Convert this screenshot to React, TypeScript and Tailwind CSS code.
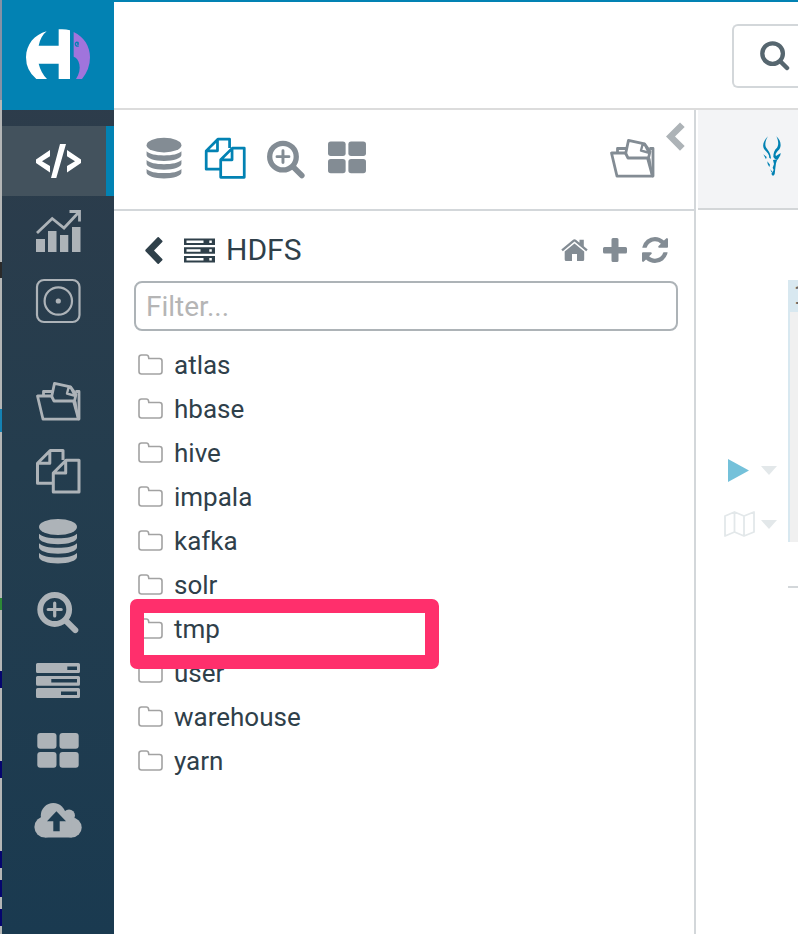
import React from "react";

type IconProps = { className?: string };

const box = "0 0 48 48";

function CodeIcon({ className }: IconProps) {
  return (
    <svg viewBox={box} className={className} fill="currentColor" aria-hidden="true">
      <path d="M2 22.500v3.500l14 9.500v-6.500L8 24.200l8-5V13zM26 7h6L22.300 41H17zM47 22.500v3.500l-14 9.500v-6.500l8-4.800-8-5V13z" />
    </svg>
  );
}

function ChartIcon({ className }: IconProps) {
  return (
    <svg viewBox={box} className={className} fill="currentColor" aria-hidden="true">
      <path d="M2 32h9v13H2zM14 24h8.500v21H14zM26 28h8.300v17H26zM38 20h8.500v25H38z" />
      <path d="M3 26 18.200 11.500 30 21 45 5M35.500 4.500H45.500v10" fill="none" stroke="currentColor" strokeWidth="2.800" />
    </svg>
  );
}

function DialIcon({ className }: IconProps) {
  return (
    <svg viewBox={box} className={className} fill="none" stroke="currentColor" strokeWidth="2.200" aria-hidden="true">
      <rect x="3" y="3" width="42.500" height="42" rx="7" />
      <circle cx="24.300" cy="24" r="13.700" />
      <circle cx="24.300" cy="24" r="2.600" fill="currentColor" stroke="none" />
    </svg>
  );
}

function FolderFilesIcon({ className }: IconProps) {
  return (
    <svg viewBox={box} className={className} fill="none" stroke="currentColor" strokeWidth="2.800" strokeLinejoin="round" strokeLinecap="round" aria-hidden="true">
      <path d="M3.500 19H17.500L20 24H39.500L44.500 42.200H9z" />
      <path d="M9.500 18.500V14.500H17.500M42.500 14.500H45V42" />
      <path d="M17.700 19.500 20.500 6.300 36.500 9.800 42 17.500 40.500 24" />
      <path d="M34.800 9.800 33 16.500 41 18.800M36.500 10 40.500 18" strokeWidth="2.400" />
      <path d="M41.500 25 43.800 40" strokeWidth="2" />
    </svg>
  );
}

function CopyIcon({ className }: IconProps) {
  return (
    <svg viewBox={box} className={className} fill="none" stroke="currentColor" strokeWidth="3" strokeLinejoin="round" aria-hidden="true">
      <path d="M19 36.200H3.500V16.200L16.200 3.500H29V13M15.800 3.500V16.200H3.500" />
      <path d="M32 13.200H45V45H19.300V26zM31.700 13.200V26H19.300" />
    </svg>
  );
}

function DatabaseIcon({ className }: IconProps) {
  return (
    <svg viewBox={box} className={className} fill="currentColor" aria-hidden="true">
      <ellipse cx="24" cy="10" rx="19" ry="8" />
      <path d="M5 16.700C8 19.800 15 21.200 24 21.200S40 19.800 43 16.700V20.700C43 24.300 34.500 27.200 24 27.200S5 24.300 5 20.700z" />
      <path d="M5 26.200C8 29.300 15 30.700 24 30.700S40 29.300 43 26.200V30.200C43 33.800 34.500 36.700 24 36.700S5 33.800 5 30.200z" />
      <path d="M5 35.900C8 39 15 40.400 24 40.400S40 39 43 35.900V39.900C43 43.500 34.500 46.400 24 46.400S5 43.500 5 39.900z" />
    </svg>
  );
}

function SearchPlusIcon({ className }: IconProps) {
  return (
    <svg viewBox={box} className={className} fill="none" stroke="currentColor" strokeLinecap="round" aria-hidden="true">
      <circle cx="20.700" cy="22.500" r="14.500" strokeWidth="5.800" />
      <path d="M32.500 34.300 41.300 43.100" strokeWidth="6" />
      <path d="M14.200 22.500H27.200M20.700 16V29" strokeWidth="3.200" />
    </svg>
  );
}

function ServersIcon({ className }: IconProps) {
  return (
    <svg viewBox={box} className={className} fill="currentColor" fillRule="evenodd" aria-hidden="true">
      <path d="M3.500 6H44.500Q46 6 46 7.500V14.500Q46 16 44.500 16H3.500Q2 16 2 14.500V7.500Q2 6 3.500 6zM33.300 9.500V13H43V9.500z" />
      <path d="M3.500 19H44.500Q46 19 46 20.500V27.200Q46 28.700 44.500 28.700H3.500Q2 28.700 2 27.200V20.500Q2 19 3.500 19zM17.300 22V25.500H43V22z" />
      <path d="M3.500 31H44.500Q46 31 46 32.500V39.500Q46 41 44.500 41H3.500Q2 41 2 39.500V32.500Q2 31 3.500 31zM27 34.500V38H43V34.500z" />
    </svg>
  );
}

function GridIcon({ className }: IconProps) {
  return (
    <svg viewBox={box} className={className} fill="currentColor" aria-hidden="true">
      <rect x="3.300" y="6" width="19.200" height="15.700" rx="3" />
      <rect x="25.500" y="6" width="19.200" height="15.700" rx="3" />
      <rect x="3.300" y="25" width="19.200" height="15.700" rx="3" />
      <rect x="25.500" y="25" width="19.200" height="15.700" rx="3" />
    </svg>
  );
}

function CloudUploadIcon({ className }: IconProps) {
  return (
    <svg viewBox="0 0 48 48" className={className} fill="currentColor" aria-hidden="true">
      <circle cx="19.300" cy="18.500" r="12.500" />
      <circle cx="35" cy="18.500" r="6" />
      <circle cx="10.900" cy="30" r="10.500" />
      <circle cx="37.700" cy="30.500" r="10" />
      <path d="M10.900 20H37.700V40.500H10.900z" />
      <path d="M22.400 14.200 32 24.300H25.700V34.200H19.300V24.300H13z" fill="#1d3c50" />
    </svg>
  );
}

function ChevronIcon({ className }: IconProps) {
  return (
    <svg viewBox="0 0 19 29" className={className} fill="currentColor" aria-hidden="true">
      <path d="M14 .5 18.700 5 9 14.500 18.700 24 14 28.700 0 14.500z" />
    </svg>
  );
}

function BackIcon({ className }: IconProps) {
  return (
    <svg viewBox="0 0 18 27" className={className} fill="currentColor" aria-hidden="true">
      <path d="M12.600.3Q13.200-.2 13.800.3L17.300 3.800Q17.800 4.500 17.300 5L9 13.500 17.300 22Q17.800 22.600 17.300 23.200L13.800 26.700Q13.200 27.200 12.600 26.700L.5 14.200Q0 13.500.5 12.800z" />
    </svg>
  );
}

function RackIcon({ className }: IconProps) {
  return (
    <svg viewBox="0 0 31 25" className={className} fill="currentColor" fillRule="evenodd" aria-hidden="true">
      <path d="M0 .5H31V7H0zM2.500 2.500V5H19.500V2.500zM25.300 2.500V5H27.800V2.500z" />
      <path d="M0 9.200H31V15.700H0zM2.500 11.200V13.700H16.500V11.200zM25.300 11.200V13.700H27.800V11.200z" />
      <path d="M0 18H31V24.500H0zM2.500 20V22.500H19.500V20zM25.300 20V22.500H27.800V20z" />
    </svg>
  );
}

function HomeIcon({ className }: IconProps) {
  return (
    <svg viewBox="0 0 27 22" className={className} fill="currentColor" aria-hidden="true">
      <path d="M13.500 4.500 23.200 12.600V20.500Q23.200 22 21.700 22H16V15H11V22H5.200Q3.700 22 3.700 20.500V12.600z" />
      <path d="M13.500.3Q14.500.3 15.200.9L18.500 3.700V.7H22.800V7.300L26.700 10.600 25.200 12.200 13.500 2.600 1.800 12.200.3 10.600 11.800.9Q12.500.3 13.500.3z" />
    </svg>
  );
}

function PlusIcon({ className }: IconProps) {
  return (
    <svg viewBox="0 0 24 24" className={className} fill="currentColor" aria-hidden="true">
      <path d="M10 0h4q1.500 0 1.500 1.500V9H22.500Q24 9 24 10.500v3.500Q24 15.500 22.500 15.500H15.500V22.500Q15.500 24 14 24H10Q8.500 24 8.500 22.500V15.500H1.500Q0 15.500 0 14V10.500Q0 9 1.500 9H8.500V1.500Q8.500 0 10 0z" />
    </svg>
  );
}

function RefreshIcon({ className }: IconProps) {
  return (
    <svg viewBox="0 0 1536 1536" className={className} fill="currentColor" aria-hidden="true">
      <path d="M1511 928q0 5-1 7-64 268-268 434.500T764 1536q-146 0-282.500-55T238 1324l-129 129q-19 19-45 19t-45-19-19-45V960q0-26 19-45t45-19h448q26 0 45 19t19 45-19 45l-137 137q71 66 161 102t187 36q134 0 250-65t186-179q11-17 53-117 8-23 30-23h192q13 0 22.500 9.500t9.500 22.500zm25-800v448q0 26-19 45t-45 19h-448q-26 0-45-19t-19-45 19-45l138-138Q969 256 768 256q-134 0-250 65T332 500q-11 17-53 117-8 23-30 23H50q-13 0-22.500-9.500T18 608v-7q65-268 270-434.500T768 0q146 0 284 55.500T1297 212l130-129q19-19 45-19t45 19 19 45z" />
    </svg>
  );
}

function FolderIcon({ className }: IconProps) {
  return (
    <svg viewBox="0 0 25 22" className={className} fill="none" stroke="currentColor" strokeWidth="1.600" aria-hidden="true">
      <path d="M3.500 1H8.300Q10.300 1 10.500 3L10.800 4.500H21.500Q24 4.500 24 7V17.500Q24 20 21.500 20H3.500Q1 20 1 17.500V3.500Q1 1 3.500 1z" />
    </svg>
  );
}

function SearchIcon({ className }: IconProps) {
  return (
    <svg viewBox="0 0 30 30" className={className} fill="none" stroke="currentColor" strokeLinecap="round" aria-hidden="true">
      <circle cx="12.600" cy="12.600" r="10.300" strokeWidth="4.300" />
      <path d="M21 21 27 27" strokeWidth="4.500" />
    </svg>
  );
}

function Logo() {
  return (
    <svg viewBox="78 87 192 150" className="h-[50px] w-16" role="img" aria-label="Hue">
      <path fill="#fff" d="M140 94Q122 108 116 137H176V88Q194 86 210 91V237H176V191H116Q123 219 141 237H109Q78 212 78 172C79 133 103 104 140 94z" />
      <path fill="#a074dc" d="M221 96C252 110 270 139 270 172Q270 208 246 237H228C238 222 241 207 238 193 236 181 230 173 221 170z" />
      <path fill="none" stroke="#0282b3" strokeWidth="4" d="M236 128Q227 124 226 132 227 140 236 138M231 132H237" />
    </svg>
  );
}

function ImpalaIcon() {
  return (
    <svg viewBox="518 108 54 120" className="h-10 w-[18px]" fill="#0282b3" role="img" aria-label="Impala">
      <path d="M533 109C519 123 514 138 523 149 531 157 537 163 537 174L542 176C541 161 537 156 530 146 522 137 524 124 533 109z" />
      <path d="M558 109C564 120 566 134 560 143 552 150 549 158 549 171L554 177 562 179 570 166 571 159 557 168C553 163 559 156 566 149 575 138 571 120 558 109z" />
      <path d="M548 180 561 178 557 190 555 205 553 223 548 228 543 222 550 210 547 203 551 192z" />
      <path d="M519 163 529 171 527 178 523 170zM531 184 539 194 537 201 532 192zM540 207 546 216 543 217z" />
    </svg>
  );
}

function MapIcon() {
  return (
    <svg viewBox="0 0 31 26" className="h-[26px] w-[31px]" fill="none" stroke="#e3e8ea" strokeWidth="1.800" strokeLinejoin="round" aria-hidden="true">
      <path d="M1 5 10.500 1 20 5 30 1V21L20 25 10.500 21 1 25zM10.500 1V21M20 5V25" />
    </svg>
  );
}

function Caret() {
  return (
    <svg viewBox="0 0 16 9" className="h-[9px] w-4" fill="#e3e8ea" aria-hidden="true">
      <path d="M0 0H16L8 9z" />
    </svg>
  );
}

type NavItem = { label: string; Icon: (props: IconProps) => React.ReactElement; active?: boolean };

const navGroups: NavItem[][] = [
  [
    { label: "Editor", Icon: CodeIcon, active: true },
    { label: "Dashboard", Icon: ChartIcon },
    { label: "Scheduler", Icon: DialIcon },
  ],
  [
    { label: "Documents", Icon: FolderFilesIcon },
    { label: "Files", Icon: CopyIcon },
    { label: "Tables", Icon: DatabaseIcon },
    { label: "Indexes", Icon: SearchPlusIcon },
    { label: "Jobs", Icon: ServersIcon },
    { label: "HBase", Icon: GridIcon },
    { label: "Importer", Icon: CloudUploadIcon },
  ],
];

const directories = ["atlas", "hbase", "hive", "impala", "kafka", "solr", "tmp", "user", "warehouse", "yarn"];

/* Sliver of the window behind, seen along the left edge. */
function BackdropEdge() {
  return (
    <div className="flex w-[2px] shrink-0 flex-col bg-[#b4b6b6]">
      <div className="h-[100px] bg-[#8491a6]" />
      <div className="mt-[162px] h-4 bg-[#2a2a2a]" />
      <div className="mt-[131px] h-[23px] bg-[#1482b4]" />
      <div className="mt-[166px] h-3 bg-[#2d8a36]" />
      <div className="mt-[61px] h-[17px] bg-[#05056e]" />
      <div className="mt-[73px] h-[17px] bg-[#05056e]" />
      <div className="mt-[73px] h-[17px] bg-[#05056e]" />
      <div className="mt-3 h-[17px] bg-[#05056e]" />
      <div className="mt-3 h-[17px] bg-[#05056e]" />
    </div>
  );
}

function Sidebar() {
  return (
    <aside className="flex w-28 shrink-0 flex-col bg-gradient-to-b from-[#2f3c4a] via-[#243d4e] to-[#1a3a50]">
      <a href="#home" className="flex h-[110px] items-center justify-center bg-[#0282b3] pb-[2px]">
        <Logo />
      </a>
      <nav className="flex flex-col gap-[30px] pt-4">
        {navGroups.map((group, i) => (
          <div key={i} className="flex flex-col">
            {group.map(({ label, Icon, active }) => (
              <a
                key={label}
                href={"#" + label.toLowerCase()}
                aria-label={label}
                className={
                  active
                    ? "flex h-[70px] items-center justify-center border-r-8 border-[#0282b3] bg-[#43525d] pl-2 text-white"
                    : "flex h-[70px] items-center justify-center text-[#adb3b8]"
                }
              >
                <Icon className="size-12" />
              </a>
            ))}
          </div>
        ))}
      </nav>
    </aside>
  );
}

function AssistPanel() {
  return (
    <section className="flex w-[582px] shrink-0 flex-col border-r-2 border-[#d3d7da]">
      <div className="flex h-[101px] items-center border-b-2 border-[#d3d7da] pr-[9px] pb-[3px] pl-7 text-[#838c94]">
        <div className="flex gap-[17px]">
          <button aria-label="Tables"><DatabaseIcon className="size-11" /></button>
          <button aria-label="Files" className="text-[#0282b3]"><CopyIcon className="size-11" /></button>
          <button aria-label="Indexes"><SearchPlusIcon className="size-11" /></button>
          <button aria-label="HBase"><GridIcon className="size-11" /></button>
        </div>
        <button aria-label="Documents" className="ml-auto"><FolderFilesIcon className="size-12" /></button>
        <button aria-label="Collapse panel" className="mt-3 ml-[10px] self-start text-[#adb3b7]">
          <ChevronIcon className="h-[29px] w-[19px]" />
        </button>
      </div>

      <div className="flex flex-col pt-[19px] pr-4 pl-5">
        <div className="flex h-10 items-center pr-[10px] pl-[11px] text-[#2f404a]">
          <button aria-label="Back"><BackIcon className="h-[27px] w-[18px]" /></button>
          <RackIcon className="ml-[21px] h-[25px] w-[31px]" />
          <h2 className="ml-[11px] text-[30px] leading-10">HDFS</h2>
          <div className="ml-auto flex items-center gap-[15px] text-[#838c94]">
            <button aria-label="Home"><HomeIcon className="h-[22px] w-[27px]" /></button>
            <button aria-label="Create"><PlusIcon className="size-6" /></button>
            <button aria-label="Refresh"><RefreshIcon className="size-[26px]" /></button>
          </div>
        </div>
        <input
          type="text"
          aria-label="Filter"
          placeholder="Filter..."
          className="mt-[11px] h-[50px] w-full rounded-lg border-2 border-[#adb3b7] bg-white px-[10px] text-[28px] placeholder:text-[#b5b5b5]"
        />
        <ul className="mt-3">
          {directories.map((name) => (
            <li key={name} className="relative h-11">
              <a href={"#" + name} className="flex h-11 items-center gap-[11px] pl-1 text-[26px] leading-[44px] text-[#2f404a]">
                <FolderIcon className="h-[22px] w-[25px] text-[#a2a2a2]" />
                {name}
              </a>
              {name === "tmp" && (
                <div className="pointer-events-none absolute -top-2 -left-1 z-10 h-[70px] w-[309px] rounded-[7px] border-[14px] border-[#ff2f6c]" />
              )}
            </li>
          ))}
        </ul>
      </div>
    </section>
  );
}

function EditorPane() {
  return (
    <main className="flex min-w-0 flex-1 flex-col overflow-hidden pl-[2px]">
      <div className="flex h-[100px] items-center border-b-2 border-[#d3d6d8] bg-[#f3f4f6] pb-[6px] pl-[65px]">
        <ImpalaIcon />
      </div>
      <div className="mt-[70px] flex">
        <div className="flex w-[90px] shrink-0 flex-col gap-[29px] pt-[179px] pl-[26px]">
          <div className="flex items-center justify-between pr-[11px] pl-1">
            <button aria-label="Execute">
              <svg viewBox="0 0 21 23" className="h-[23px] w-[21px]" fill="#74c1da" aria-hidden="true">
                <path d="M0 0 21 11.500 0 23z" />
              </svg>
            </button>
            <button aria-label="Execute options"><Caret /></button>
          </div>
          <div className="flex items-center justify-between pr-[11px]">
            <button aria-label="Explain"><MapIcon /></button>
            <button aria-label="Explain options"><Caret /></button>
          </div>
        </div>
        <div className="flex min-w-0 flex-1 flex-col">
          <div className="h-[262px] overflow-hidden border-l-2 border-[#d8e8f0] bg-[#f0f0f0]">
            <div className="h-8 bg-[#d8e8f0] pl-[3px] font-['DejaVu_Sans_Mono',monospace] text-[24px] leading-8 text-[#666]">1</div>
          </div>
          <div className="mt-11 h-[2px] bg-[#d3d7da]" />
        </div>
      </div>
    </main>
  );
}

export default function App() {
  return (
    <div className="flex min-h-screen overflow-hidden bg-white font-[Roboto,sans-serif]">
      <BackdropEdge />
      <Sidebar />
      <div className="flex min-w-0 flex-1 flex-col">
        <header className="flex h-[110px] justify-end border-t-2 border-b-2 border-t-[#0282b3] border-b-[#dcdcdc] pt-[22px]">
          <button aria-label="Search" className="flex h-16 w-[66px] items-center rounded-l-md border-2 border-r-0 border-[#d3d7da] pl-[26px] text-[#56666f]">
            <SearchIcon className="size-[30px]" />
          </button>
        </header>
        <div className="flex flex-1">
          <AssistPanel />
          <EditorPane />
        </div>
      </div>
    </div>
  );
}
